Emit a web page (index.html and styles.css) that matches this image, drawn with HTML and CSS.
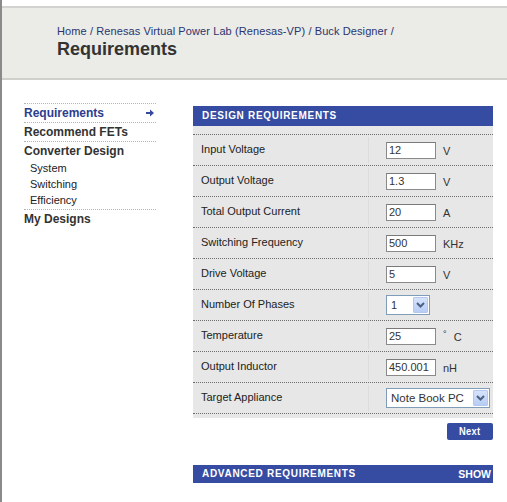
FILE: index.html
```html
<!DOCTYPE html>
<html>
<head>
<meta charset="utf-8">
<link rel="stylesheet" href="styles.css">
</head>
<body>
<div class="page">
  <div class="top-gap"></div>
  <header class="masthead">
    <div class="crumbs"><a>Home</a> / <a>Renesas Virtual Power Lab (Renesas-VP)</a> / <a>Buck Designer</a> /</div>
    <h1 class="title">Requirements</h1>
  </header>
  <div class="content">
    <nav class="sidenav">
      <ul class="navlist">
        <li class="nav-item active"><span>Requirements</span>
          <svg class="arrow" width="8" height="8" viewBox="0 0 8 8"><path d="M0 3h4V0.5L8 4 4 7.5V5H0z" fill="#34489c"/></svg>
        </li>
        <li class="nav-item">Recommend FETs</li>
        <li class="nav-group">
          <div class="nav-head">Converter Design</div>
          <div class="sub">System</div>
          <div class="sub">Switching</div>
          <div class="sub">Efficiency</div>
        </li>
        <li class="nav-item last">My Designs</li>
      </ul>
    </nav>
    <main class="mainpanel">
      <section class="panel">
        <div class="bar">DESIGN REQUIREMENTS</div>
        <div class="panel-body">
          <div class="row"><div class="lbl">Input Voltage</div><div class="sep"></div><div class="val"><span class="inp">12</span><span class="unit">V</span></div></div>
          <div class="row"><div class="lbl">Output Voltage</div><div class="sep"></div><div class="val"><span class="inp">1.3</span><span class="unit">V</span></div></div>
          <div class="row"><div class="lbl">Total Output Current</div><div class="sep"></div><div class="val"><span class="inp">20</span><span class="unit">A</span></div></div>
          <div class="row"><div class="lbl">Switching Frequency</div><div class="sep"></div><div class="val"><span class="inp">500</span><span class="unit">KHz</span></div></div>
          <div class="row"><div class="lbl">Drive Voltage</div><div class="sep"></div><div class="val"><span class="inp">5</span><span class="unit">V</span></div></div>
          <div class="row"><div class="lbl">Number Of Phases</div><div class="sep"></div><div class="val"><span class="sel small"><span class="seltext">1</span><span class="dd"><svg width="9" height="6" viewBox="0 0 9 6"><path d="M1 1l3.5 3.5L8 1" fill="none" stroke="#4d6185" stroke-width="2"/></svg></span></span></div></div>
          <div class="row"><div class="lbl">Temperature</div><div class="sep"></div><div class="val"><span class="inp">25</span><span class="unit deg"><sup>°</sup> C</span></div></div>
          <div class="row"><div class="lbl">Output Inductor</div><div class="sep"></div><div class="val"><span class="inp">450.001</span><span class="unit">nH</span></div></div>
          <div class="row"><div class="lbl">Target Appliance</div><div class="sep"></div><div class="val"><span class="sel wide"><span class="seltext">Note Book PC</span><span class="dd"><svg width="9" height="6" viewBox="0 0 9 6"><path d="M1 1l3.5 3.5L8 1" fill="none" stroke="#4d6185" stroke-width="2"/></svg></span></span></div></div>
        </div>
      </section>
      <div class="actions"><button class="next"><span class="cond">Next</span></button></div>
      <div class="bar adv"><span>ADVANCED REQUIREMENTS</span><span class="show">SHOW</span></div>
    </main>
  </div>
</div>
</body>
</html>
```
FILE: styles.css
```css
* { box-sizing: border-box; }
html, body { margin: 0; padding: 0; background: #fff; }
body { font-family: "Liberation Sans", Arial, sans-serif; color: #222; }
.page {
  border-left: 2px solid #8a8a8a;
  min-height: 502px;
}
.top-gap { height: 6px; }
.masthead {
  background: #ebebe7;
  border-top: 2px solid #d2d2d0;
  border-bottom: 2px solid #cfcfcc;
  height: 74px;
  padding: 17px 0 0 55px;
}
.crumbs {
  font-size: 11px;
  color: #2a3570;
  line-height: 13px;
  letter-spacing: 0.1px;
}
.crumbs a { color: #2a3570; }
.title {
  margin: 0;
  font-size: 18px;
  line-height: 22px;
  font-weight: bold;
  color: #333;
}
.content {
  display: flex;
  padding-top: 22px;
}
.sidenav {
  width: 132px;
  margin-left: 22px;
  margin-top: 1px;
}
.navlist {
  list-style: none;
  margin: 0;
  padding: 0;
  border-top: 1px dotted #b5b5b5;
}
.nav-item, .nav-head {
  font-size: 12px;
  font-weight: bold;
  color: #333;
  height: 19px;
  line-height: 19px;
}
.nav-item { border-bottom: 1px dotted #b5b5b5; display: flex; justify-content: space-between; align-items: center; }
.nav-item.active { color: #2d3d8e; }
.nav-item.last { border-bottom: none; }
.arrow { margin-right: 2px; }
.nav-group { border-bottom: 1px dotted #b5b5b5; }
.nav-head { height: 19px; line-height: 18px; }
.sub {
  font-size: 11px;
  color: #222;
  padding-left: 6px;
  height: 16px;
  line-height: 15px;
}
.mainpanel {
  width: 300px;
  margin-left: 37px;
  margin-top: 4px;
}
.bar {
  background: #364ca2;
  color: #fff;
  font-size: 10px;
  font-weight: bold;
  letter-spacing: 0.7px;
  height: 20px;
  line-height: 20px;
  padding-left: 9px;
}
.panel-body {
  background: #e7e7e7;
  padding: 8px 0 4px;
}
.row {
  display: flex;
  align-items: center;
  height: 31px;
  border-top: 1px dotted #6e6e6e;
}
.row:last-child { border-bottom: 1px dotted #6e6e6e; height: 32px; }
.lbl {
  width: 174px;
  padding-left: 8px;
  font-size: 11px;
  color: #222;
  position: relative;
  top: -1px;
}
.sep {
  width: 3px;
  align-self: stretch;
  margin: 2px 0;
  background: repeating-linear-gradient(to bottom, #b0b0b0 0 1px, transparent 1px 2px);
  border-left: 1px solid transparent;
  border-right: 1px solid transparent;
  background-clip: content-box;
  box-shadow: inset 1px 0 0 #dcdcdc;
}
.val {
  display: flex;
  align-items: center;
  padding-left: 16px;
  font-size: 11px;
}
.inp {
  width: 50px;
  height: 17px;
  border: 1px solid #8a8a8a;
  border-top-color: #7a7a7a;
  background: #fff;
  font-size: 11px;
  line-height: 15px;
  padding-left: 2px;
  color: #333;
}
.unit { margin-left: 7px; color: #333; position: relative; top: 1px; }
.deg sup { font-size: 9px; position: relative; top: -2px; vertical-align: top; margin-right: 4px; }
.sel {
  display: flex;
  align-items: center;
  justify-content: space-between;
  height: 20px;
  border: 1px solid #7f9db9;
  background: #fff;
  font-size: 11px;
  color: #333;
  padding: 1px 1px 1px 4px;
}
.sel.small { width: 44px; }
.sel.wide { width: 104px; font-size: 11.5px; }
.dd {
  width: 15px;
  height: 16px;
  background: linear-gradient(#d6e3fb, #b7cdf5);
  border: 1px solid #b4c8ee;
  border-radius: 1px;
  display: flex;
  align-items: center;
  justify-content: center;
}
.actions {
  display: flex;
  justify-content: flex-end;
  padding-top: 5px;
  height: 47px;
}
.next {
  width: 46px;
  height: 17px;
  background: #364ca2;
  color: #fff;
  border: none;
  border-radius: 2px;
  font-family: "Liberation Sans", Arial, sans-serif;
  font-size: 11px;
  font-weight: bold;
  letter-spacing: 0.4px;
  padding: 0;
  line-height: 17px;
}
.cond { display: inline-block; transform: scaleX(0.85); }
.adv {
  display: flex;
  justify-content: space-between;
  height: 18px;
  line-height: 18px;
  padding-right: 2px;
}
.show { letter-spacing: 0; font-size: 10.5px; }
```
